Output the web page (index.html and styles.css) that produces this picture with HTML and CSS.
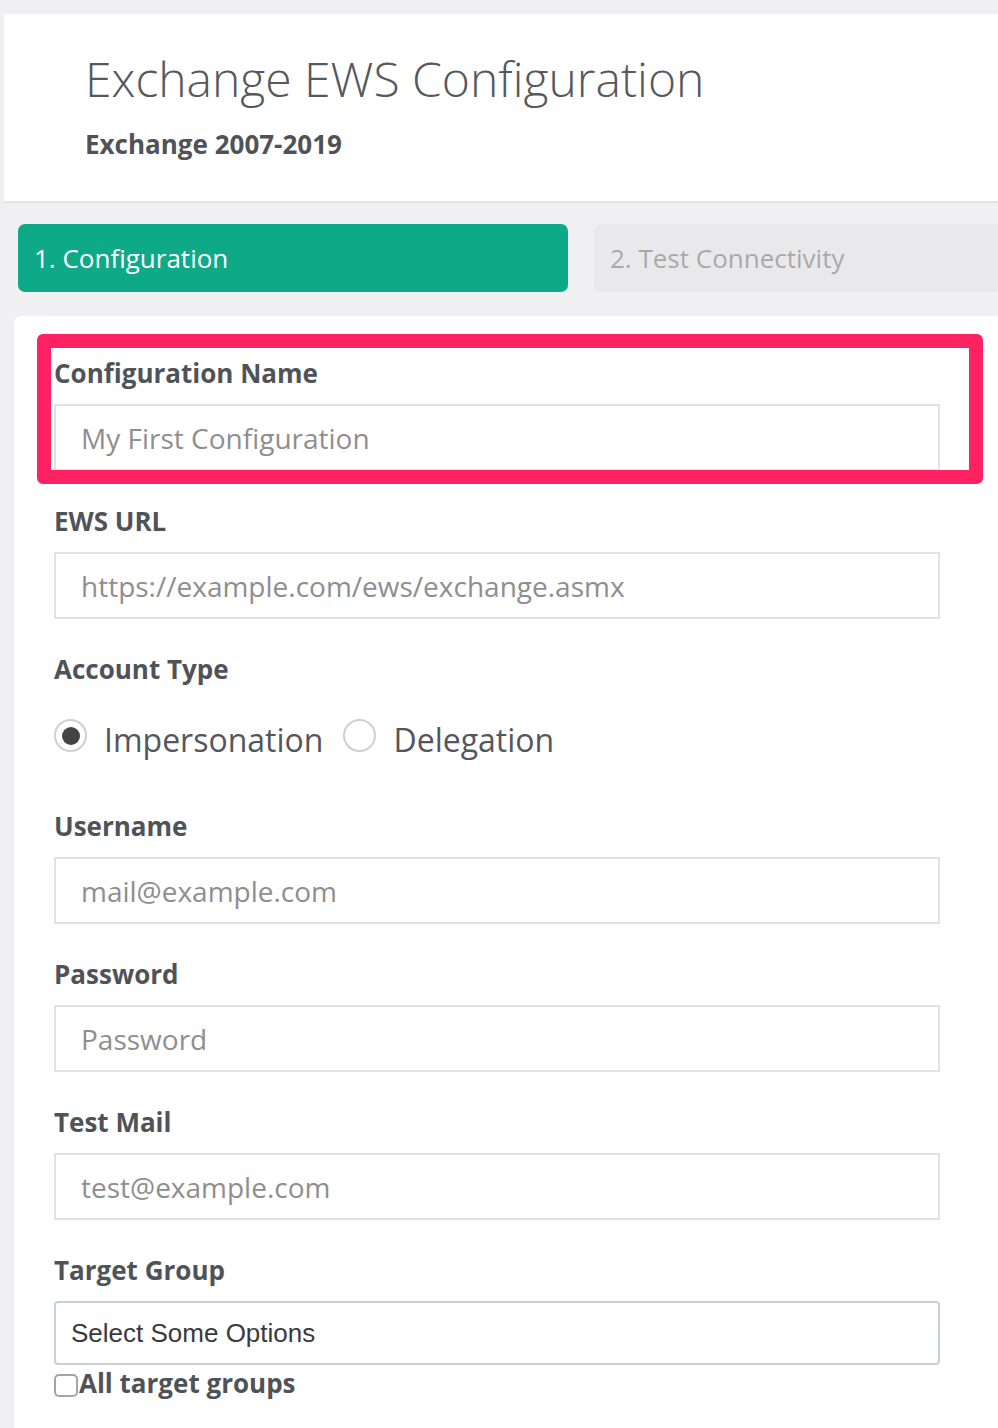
FILE: index.html
```html
<!DOCTYPE html>
<html lang="en">
<head>
<meta charset="utf-8">
<title>Exchange EWS Configuration</title>
<link rel="stylesheet" href="styles.css">
</head>
<body>
  <header class="page-header">
    <h1 class="page-title">Exchange EWS Configuration</h1>
    <p class="page-subtitle">Exchange 2007-2019</p>
  </header>

  <nav class="steps">
    <div class="step step-active">1. Configuration</div>
    <div class="step step-inactive">2. Test Connectivity</div>
  </nav>

  <main class="card">
    <div class="highlight" aria-hidden="true"></div>

    <div class="field">
      <label class="field-label" for="cfg-name">Configuration Name</label>
      <input class="text-input" id="cfg-name" type="text" placeholder="My First Configuration">
    </div>

    <div class="field">
      <label class="field-label" for="ews-url">EWS URL</label>
      <input class="text-input" id="ews-url" type="text" placeholder="https://example.com/ews/exchange.asmx">
    </div>

    <div class="field">
      <div class="field-label">Account Type</div>
      <div class="radio-row">
        <label class="radio-option">
          <input class="radio" type="radio" name="acct" checked>
          <span class="radio-text">Impersonation</span>
        </label>
        <label class="radio-option">
          <input class="radio" type="radio" name="acct">
          <span class="radio-text">Delegation</span>
        </label>
      </div>
    </div>

    <div class="field field-after-radio">
      <label class="field-label" for="username">Username</label>
      <input class="text-input" id="username" type="text" placeholder="mail@example.com">
    </div>

    <div class="field">
      <label class="field-label" for="password">Password</label>
      <input class="text-input" id="password" type="password" placeholder="Password">
    </div>

    <div class="field">
      <label class="field-label" for="testmail">Test Mail</label>
      <input class="text-input" id="testmail" type="text" placeholder="test@example.com">
    </div>

    <div class="field">
      <div class="field-label">Target Group</div>
      <div class="multi-select">Select Some Options</div>
      <label class="check-row">
        <input class="checkbox" type="checkbox">
        <span class="check-text">All target groups</span>
      </label>
    </div>
  </main>
</body>
</html>
```

FILE: styles.css
```css
* {
  box-sizing: border-box;
}

html, body {
  margin: 0;
  padding: 0;
}

body {
  background: #f0f0f2;
  font-family: "Open Sans", "Noto Sans", sans-serif;
  color: #53575c;
  overflow: hidden;
  height: 1428px;
}

.page-header {
  margin: 14px 0 0 4px;
  background: #ffffff;
  padding: 36px 0 39px 81px;
  border-bottom: 2px solid #e3e3e6;
}

.page-title {
  margin: 0;
  font-size: 48px;
  font-weight: 300;
  line-height: 58px;
  color: #55595e;
}

.page-subtitle {
  margin: 18px 0 0;
  font-size: 26px;
  font-weight: 700;
  line-height: 36px;
  color: #4f5358;
}

.steps {
  display: flex;
  gap: 26px;
  margin-top: 21px;
  padding-left: 18px;
}

.step {
  height: 68px;
  line-height: 68px;
  font-size: 26px;
  border-radius: 7px;
  padding-left: 16px;
}

.step-active {
  width: 550px;
  background: #0eaa88;
  color: #ffffff;
}

.step-inactive {
  flex: 1;
  background: #e9e9eb;
  color: #a9a9ab;
  border-radius: 7px 0 0 7px;
}

.card {
  position: relative;
  margin: 24px 0 0 14px;
  background: #ffffff;
  border-radius: 8px 0 0 0;
  padding: 39px 58px 60px 40px;
}

.highlight {
  position: absolute;
  left: 23px;
  top: 18px;
  width: 946px;
  height: 150px;
  border: 14px solid #ff2262;
  border-radius: 6px;
  pointer-events: none;
}

.field + .field {
  margin-top: 32px;
}

.field-label {
  display: block;
  font-size: 26px;
  font-weight: 700;
  line-height: 36px;
  color: #4f5358;
  margin-bottom: 13px;
}

.text-input {
  display: block;
  width: 886px;
  height: 67px;
  border: 2px solid #e2e2e2;
  border-radius: 0;
  padding: 0 0 0 25px;
  font-family: "Open Sans", "Noto Sans", sans-serif;
  font-size: 28px;
  color: #555;
  background: #ffffff;
  outline: none;
}

.text-input::placeholder {
  color: #8e8e8e;
  opacity: 1;
}

.radio-row {
  display: flex;
  align-items: flex-start;
  gap: 20px;
  margin-top: 31px;
  height: 44px;
}

.radio-option {
  display: flex;
  align-items: flex-start;
  gap: 17px;
}

.radio {
  appearance: none;
  -webkit-appearance: none;
  margin: 1px 0 0;
  width: 33px;
  height: 33px;
  border: 2px solid #d0d0d0;
  border-radius: 50%;
  background: #ffffff;
  position: relative;
  flex: none;
}

.radio:checked::after {
  content: "";
  position: absolute;
  left: 5.5px;
  top: 5.5px;
  width: 18px;
  height: 18px;
  border-radius: 50%;
  background: #444447;
}

.radio-text {
  font-size: 32px;
  line-height: 44px;
  color: #53575c;
}

.field-after-radio {
  margin-top: 46px !important;
}

.multi-select {
  width: 886px;
  height: 64px;
  border: 2px solid #c8d0d9;
  border-radius: 4px;
  padding-left: 15px;
  line-height: 60px;
  font-family: "Liberation Sans", Arial, sans-serif;
  font-size: 26px;
  color: #3a3a3a;
}

.check-row {
  display: flex;
  align-items: flex-start;
  height: 36px;
}

.checkbox {
  appearance: none;
  -webkit-appearance: none;
  margin: 9px 1px 0 0;
  width: 24px;
  height: 23px;
  border: 2px solid #a5a5a5;
  border-radius: 5px;
  background: #ffffff;
  flex: none;
}

.check-text {
  font-size: 26px;
  font-weight: 700;
  line-height: 36px;
  color: #4f5358;
}
```
